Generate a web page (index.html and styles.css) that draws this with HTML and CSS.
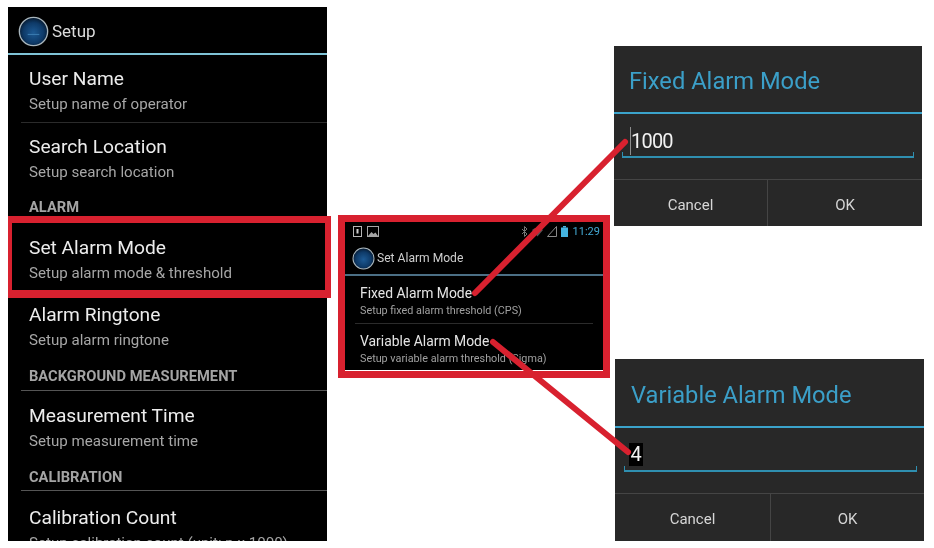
FILE: index.html
```html
<!DOCTYPE html>
<html lang="en">
<head>
<meta charset="utf-8">
<title>Setup</title>
<link rel="stylesheet" href="styles.css">
</head>
<body>
<main class="canvas">
  <svg width="0" height="0" class="defs" aria-hidden="true">
    <defs>
      <radialGradient id="orb" cx="50%" cy="55%" r="55%">
        <stop offset="0" stop-color="#1d5a94"/>
        <stop offset="0.65" stop-color="#0e3a68"/>
        <stop offset="1" stop-color="#06182c"/>
      </radialGradient>
    </defs>
  </svg>

  <section class="phone phone-main">
    <header class="bar">
      <svg class="orb" viewBox="0 0 32 32"><circle cx="16" cy="16" r="14.6" fill="url(#orb)" stroke="#a9b6bd" stroke-width="1.4"/><path d="M10 19h12" stroke="#3d7fb3" stroke-width="1"/></svg>
      <span>Setup</span>
    </header>
    <div class="row"><div class="t">User Name</div><div class="s">Setup name of operator</div></div>
    <div class="rule dim"></div>
    <div class="row"><div class="t">Search Location</div><div class="s">Setup search location</div></div>
    <div class="cat cat-alarm">ALARM</div>
    <div class="row"><div class="t">Set Alarm Mode</div><div class="s">Setup alarm mode &amp; threshold</div></div>
    <div class="row"><div class="t">Alarm Ringtone</div><div class="s">Setup alarm ringtone</div></div>
    <div class="cat">BACKGROUND MEASUREMENT</div>
    <div class="rule spaced"></div>
    <div class="row"><div class="t">Measurement Time</div><div class="s">Setup measurement time</div></div>
    <div class="cat cat-short">CALIBRATION</div>
    <div class="rule"></div>
    <div class="row last"><div class="t">Calibration Count</div><div class="s">Setup calibration count (unit: n x 1000)</div></div>
  </section>

  <section class="phone phone-mini">
    <div class="status">
      <svg class="st" width="11" height="11" viewBox="0 0 11 11"><rect x="1.5" y="0.5" width="8" height="10" fill="none" stroke="#b5b5b5"/><rect x="4.5" y="3" width="2" height="4.5" fill="#d0d0d0"/></svg>
      <svg class="st" width="12" height="11" viewBox="0 0 12 11"><rect x="0.5" y="0.5" width="11" height="10" fill="none" stroke="#a5a5a5"/><path d="M1 10l3.5-4 2 2 2-1.5L11 10z" fill="#a5a5a5"/></svg>
      <span class="spacer"></span>
      <svg class="st" width="7" height="11" viewBox="0 0 7 11"><path d="M1 3l5 5-2.500 2.500v-10l2.500 2.500-5 5" fill="none" stroke="#777" stroke-width="1"/></svg>
      <svg class="st" width="11" height="11" viewBox="0 0 11 11"><path d="M0 4a8 8 0 0 1 11 0L5.500 10.500z" fill="#555"/></svg>
      <svg class="st" width="10" height="11" viewBox="0 0 10 11"><path d="M9.500 0.500v10h-9z" fill="none" stroke="#8a8a8a"/></svg>
      <svg class="st" width="7" height="11" viewBox="0 0 7 11"><rect x="2" y="0" width="3" height="1.500" fill="#45b4e0"/><rect x="0" y="1.500" width="7" height="9.500" fill="#45b4e0"/></svg>
      <span class="clock">11:29</span>
    </div>
    <header class="bar">
      <svg class="orb" viewBox="0 0 32 32"><circle cx="16" cy="16" r="14.6" fill="url(#orb)" stroke="#a9b6bd" stroke-width="1.4"/></svg>
      <span>Set Alarm Mode</span>
    </header>
    <div class="row"><div class="t">Fixed Alarm Mode</div><div class="s">Setup fixed alarm threshold (CPS)</div></div>
    <div class="rule dim"></div>
    <div class="row"><div class="t">Variable Alarm Mode</div><div class="s">Setup variable alarm threshold (Sigma)</div></div>
  </section>

  <section class="dialog dialog-fixed">
    <h2>Fixed Alarm Mode</h2>
    <div class="field"><span class="caret"></span><span class="value">1000</span></div>
    <div class="buttons"><div class="btn">Cancel</div><div class="btn">OK</div></div>
  </section>

  <section class="dialog dialog-variable">
    <h2>Variable Alarm Mode</h2>
    <div class="field"><span class="value selected">4</span></div>
    <div class="buttons"><div class="btn">Cancel</div><div class="btn">OK</div></div>
  </section>

  <div class="mark mark-row"></div>
  <div class="mark mark-mini"></div>
  <svg class="arrows" width="934" height="548" viewBox="0 0 934 548" aria-hidden="true">
    <path d="M475 293L625 142M493 342L628 452" stroke="#d8212f" stroke-width="6" stroke-linecap="round"/>
  </svg>
</main>
</body>
</html>
```
FILE: styles.css
```css
* { box-sizing: border-box; }
html, body { margin: 0; padding: 0; background: #fff; }
body { font-family: Roboto, "Noto Sans", sans-serif; overflow: hidden; }
.canvas { position: relative; width: 934px; height: 548px; overflow: hidden; }
.defs { position: absolute; }

.phone, .dialog { position: absolute; overflow: hidden; }
.phone { background: #000; }
.phone > *, .dialog > * { filter: blur(0.35px); }

.phone-main { left: 8px; top: 7px; width: 319px; height: 534px; }
.phone-main .bar { display: flex; align-items: center; height: 48px; padding: 2px 0 0 10px; border-bottom: 2px solid #7fc3d6; color: #dcdcdc; font-size: 17px; }
.phone-main .orb { width: 31px; height: 31px; margin-right: 3px; }
.phone-main .row { height: 67px; padding: 9.5px 0 0 21px; }
.phone-main .t { font-size: 19.2px; line-height: 27px; color: #ececec; }
.phone-main .s { font-size: 15.1px; line-height: 25px; color: #a6a6a6; }
.phone-main .row.last { padding-top: 12.5px; }
.rule { height: 1px; margin-left: 13px; background: #555; }
.rule.dim { background: #2b2b2b; }
.rule.spaced { margin-bottom: 1px; }
.cat { height: 33px; margin-bottom: -1px; padding: 9px 0 0 21px; font-size: 14.7px; line-height: 18px; font-weight: 700; color: #a4a4a4; }
.cat-alarm { height: 35px; padding-top: 8px; }
.cat-short { height: 32px; }

.phone-mini { left: 345px; top: 222px; width: 258px; height: 148px; }
.status { display: flex; align-items: center; gap: 4px; height: 19px; padding: 0 3px 0 7px; }
.spacer { flex: 1; }
.st { display: block; }
.clock { margin-left: 1px; font-size: 11px; color: #43a8d2; }
.phone-mini .bar { display: flex; align-items: center; height: 35px; padding: 1px 0 0 7px; border-bottom: 2px solid #4b6f85; color: #cfcfcf; font-size: 12.1px; }
.phone-mini .orb { width: 23px; height: 23px; margin-right: 2px; }
.phone-mini .row { height: 48px; padding: 6.5px 0 0 15px; }
.phone-mini .row:last-child { padding-top: 5.5px; }
.phone-mini .t { font-size: 13.9px; line-height: 20px; color: #e4e4e4; }
.phone-mini .s { font-size: 10.8px; line-height: 16px; color: #a0a0a0; }
.phone-mini .rule { margin: -1px 10px 1px 10px; }

.dialog { background: #282828; display: flex; flex-direction: column; }
.dialog-fixed { left: 614px; top: 46px; width: 308px; height: 180px; }
.dialog-variable { left: 615px; top: 359px; width: 309px; height: 182px; }
.dialog h2 { margin: 0; height: 68px; padding: 19px 0 0 15px; font-size: 23.7px; line-height: 32px; font-weight: 400; color: #3b9fc8; border-bottom: 2px solid #3ba3cb; }
.dialog-variable h2 { height: 69px; padding: 20px 0 0 16px; }
.field { position: relative; display: flex; align-items: flex-end; height: 44px; margin: 0 8px; padding: 0 0 1px 8px; border-bottom: 2px solid #2f8fb0; }
.dialog-variable .field { margin: 0 7px 0 9px; padding: 0 0 4px 5px; }
.field::before, .field::after { content: ""; position: absolute; bottom: 0; width: 1px; height: 4px; background: #2f8fb0; }
.field::before { left: 0; }
.field::after { right: 0; }
.caret { width: 1px; height: 28px; background: #8c8c8c; }
.value { font-size: 20px; line-height: 28px; letter-spacing: -0.8px; color: #f2f2f2; }
.selected { background: #000; padding: 0 1.5px; line-height: 23px; letter-spacing: 0; }
.buttons { display: grid; grid-template-columns: 153px 1fr; margin-top: 21px; flex: 1; border-top: 1px solid #454545; }
.dialog-variable .buttons { grid-template-columns: 155px 1fr; }
.btn { display: flex; align-items: center; justify-content: center; padding-top: 3px; font-size: 15px; color: #d6d6d6; }
.btn + .btn { border-left: 1px solid #454545; }

.mark { position: absolute; border-style: solid; border-color: #d8212f; }
.mark-row { left: 8px; top: 216px; width: 323px; height: 82px; border-width: 7px 6px 8px 4px; }
.mark-mini { left: 338px; top: 215px; width: 272px; height: 163px; border-width: 7px; }
.arrows { position: absolute; left: 0; top: 0; }
```
